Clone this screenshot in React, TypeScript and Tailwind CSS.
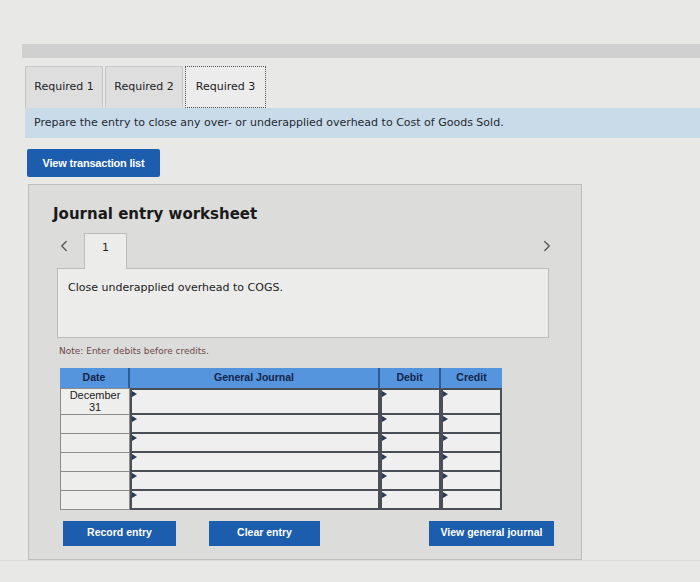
import { ChevronLeft, ChevronRight } from 'lucide-react';

const rows = [0, 1, 2, 3, 4, 5];

function Marker() {
  return (
    <span className="absolute left-0 top-[1px] w-0 h-0 border-t-[3px] border-b-[3px] border-l-[5px] border-t-transparent border-b-transparent border-l-[#2b3a55]" />
  );
}

function InputCell({ width, tall }: { width: string; tall: boolean }) {
  return (
    <div
      className={`relative ${width} ${tall ? 'h-[27px]' : 'h-[21px]'} bg-[#efefef] border-2 border-[#4a4f57] -mt-[2px] first:mt-0`}
    >
      <Marker />
    </div>
  );
}

export default function App() {
  return (
    <div
      className="w-[700px] h-[582px] bg-[#e8e8e6] overflow-hidden text-[#222]"
      style={{ fontFamily: '"DejaVu Sans", Verdana, sans-serif' }}
    >
      <div className="pt-[44px]">
        <div className="ml-[22px] h-[14px] bg-[#cfd0cf]" />
      </div>

      {/* tabs */}
      <div className="mt-[8px] ml-[25px] flex gap-[2px] text-[11px]">
        <div className="w-[78px] h-[42px] bg-[#dedede] border border-[#c6c6c6] border-b-0 flex items-center justify-center">
          Required 1
        </div>
        <div className="w-[78px] h-[42px] bg-[#dedede] border border-[#c6c6c6] border-b-0 flex items-center justify-center">
          Required 2
        </div>
        <div className="w-[81px] h-[42px] bg-[#ececec] border border-dotted border-[#555] flex items-center justify-center">
          Required 3
        </div>
      </div>

      <div className="ml-[25px] h-[30px] bg-[#c9dbe8] flex items-center pl-[9px] text-[11px] text-[#1f2a33]">
        Prepare the entry to close any over- or underapplied overhead to Cost of Goods Sold.
      </div>

      <div
        className="mt-[11px] ml-[27px] w-[133px] h-[28px] bg-[#1d5dae] rounded-[2px] flex items-center justify-center text-white font-bold text-[11px] tracking-[-0.2px]"
        style={{ fontFamily: '"Liberation Sans", Arial, sans-serif' }}
      >
        View transaction list
      </div>

      {/* worksheet */}
      <div className="mt-[7px] ml-[28px] w-[554px] h-[376px] bg-[#dcdcdb] border border-[#bdbdbd] flex flex-col">
        <div className="pl-[24px] pt-[18px] h-[48px] text-[15px] font-bold text-[#1a1a1a]">
          Journal entry worksheet
        </div>

        <div className="flex items-end h-[35px] pl-[26px] pr-[25px]">
          <ChevronLeft className="w-[18px] h-[18px] text-[#555] mb-[13px]" strokeWidth={1.75} />
          <div className="ml-[11px] w-[43px] h-[36px] -mb-px bg-[#ececeb] border border-[#bcbcbc] border-b-0 flex items-start justify-center pt-[6px] text-[11px] z-10">
            1
          </div>
          <div className="flex-1" />
          <ChevronRight className="w-[18px] h-[18px] text-[#555] mb-[13px]" strokeWidth={1.75} />
        </div>

        <div className="ml-[28px] w-[492px] h-[70px] bg-[#ececeb] border border-[#bcbcbc] pl-[10px] pt-[11px] text-[11px]">
          Close underapplied overhead to COGS.
        </div>

        <div className="ml-[30px] mt-[7px] text-[9px] text-[#6d4646]">
          Note: Enter debits before credits.
        </div>

        {/* table */}
        <div
          className="ml-[31px] mt-[9px] w-[442px]"
          style={{ fontFamily: '"Liberation Sans", Arial, sans-serif' }}
        >
          <div className="flex h-[20px] bg-[#5595dd] text-[10.5px] font-bold text-[#14244a]">
            <div className="w-[70px] flex items-center justify-center border-r-2 border-[#2d5c98]">Date</div>
            <div className="w-[250px] flex items-center justify-center border-r-2 border-[#2d5c98]">General Journal</div>
            <div className="w-[61px] flex items-center justify-center border-r-2 border-[#2d5c98]">Debit</div>
            <div className="w-[61px] flex items-center justify-center">Credit</div>
          </div>
          <div className="flex">
            <div className="w-[70px] flex flex-col">
              {rows.map((r) => (
                <div
                  key={r}
                  className={`${r === 0 ? 'h-[27px]' : 'h-[20px]'} bg-[#eeeeed] border border-[#8d8d8d] -mt-px first:mt-0 flex flex-col items-center justify-center text-[11px] leading-[12px] text-[#222]`}
                >
                  {r === 0 && (
                    <>
                      <span>December</span>
                      <span>31</span>
                    </>
                  )}
                </div>
              ))}
            </div>
            <div className="w-[250px] flex flex-col">
              {rows.map((r) => (
                <InputCell key={r} width="w-[250px]" tall={r === 0} />
              ))}
            </div>
            <div className="w-[61px] flex flex-col">
              {rows.map((r) => (
                <InputCell key={r} width="w-[61px]" tall={r === 0} />
              ))}
            </div>
            <div className="w-[61px] flex flex-col">
              {rows.map((r) => (
                <InputCell key={r} width="w-[61px]" tall={r === 0} />
              ))}
            </div>
          </div>
        </div>

        <div
          className="mt-[11px] ml-[34px] flex items-center text-white font-bold text-[10.5px]"
          style={{ fontFamily: '"Liberation Sans", Arial, sans-serif' }}
        >
          <div className="w-[113px] h-[25px] bg-[#1d5dae] flex items-center justify-center">Record entry</div>
          <div className="ml-[33px] w-[111px] h-[25px] bg-[#1d5dae] flex items-center justify-center">Clear entry</div>
          <div className="ml-[109px] w-[125px] h-[25px] bg-[#1d5dae] flex items-center justify-center">View general journal</div>
        </div>
      </div>

      <div className="h-[1px] bg-[#d8d8d8]" />
    </div>
  );
}
